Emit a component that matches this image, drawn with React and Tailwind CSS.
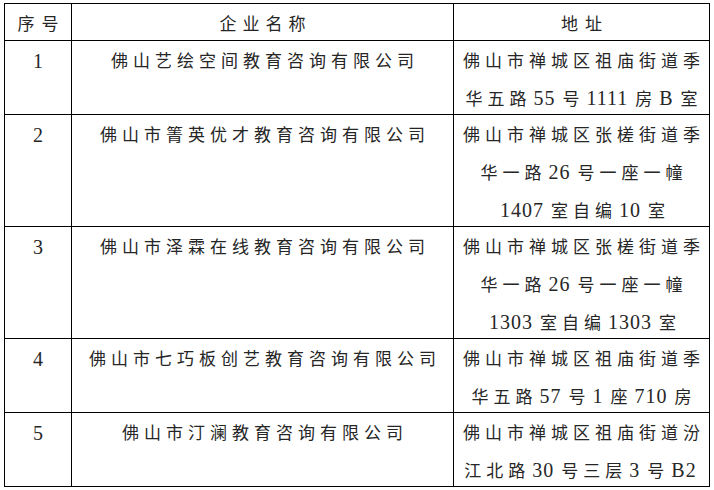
import React from "react";

const rows = [
  {
    no: "1",
    name: "佛山艺绘空间教育咨询有限公司",
    addr: ["佛山市禅城区祖庙街道季", "华五路 55 号 1111 房B 室"],
  },
  {
    no: "2",
    name: "佛山市箐英优才教育咨询有限公司",
    addr: ["佛山市禅城区张槎街道季", "华一路 26 号一座一幢", "1407 室自编 10 室"],
  },
  {
    no: "3",
    name: "佛山市泽霖在线教育咨询有限公司",
    addr: ["佛山市禅城区张槎街道季", "华一路 26 号一座一幢", "1303 室自编 1303 室"],
  },
  {
    no: "4",
    name: "佛山市七巧板创艺教育咨询有限公司",
    addr: ["佛山市禅城区祖庙街道季", "华五路 57 号 1 座 710 房"],
  },
  {
    no: "5",
    name: "佛山市汀澜教育咨询有限公司",
    addr: ["佛山市禅城区祖庙街道汾", "江北路 30 号三层 3 号 B2"],
  },
];

// split a line into CJK runs and latin runs (digits / letters)
function Line({ text }) {
  const parts = text.replace(/ /g, "").split(/([0-9A-Za-z]+)/).filter(Boolean);
  return (
    <div className="whitespace-nowrap pl-[5px]">
      {parts.map((p, i) =>
        /^[0-9A-Za-z]+$/.test(p) ? (
          <span key={i} className="text-[20px] tracking-[1px] ml-[2px] mr-[7px]">
            {p}
          </span>
        ) : (
          <span key={i}>{p}</span>
        )
      )}
    </div>
  );
}

const cell =
  "border-r border-b border-black flex flex-col items-center pt-[2px] leading-[37px]";

export default function App() {
  return (
    <div className="min-h-screen bg-white pl-[4px] pt-[3px]">
      <div
        className="grid grid-cols-[67px_382px_256px] grid-rows-[37px_74px_112px_112px_74px_74px] w-[706px] border-l border-t border-black text-[17px] tracking-[5px] text-[#262626]"
        style={{ fontFamily: '"Liberation Serif", "Noto Sans CJK SC", serif' }}
      >
        <div className={cell + " tracking-[7px] pl-[7px]"}>序号</div>
        <div className={cell + " tracking-[6px] pl-[6px]"}>企业名称</div>
        <div className={cell + " tracking-[7px] pl-[7px]"}>地址</div>

        {rows.map((r) => (
          <React.Fragment key={r.no}>
            <div className={cell}>
              <span className="text-[20px] tracking-normal">{r.no}</span>
            </div>
            <div className={cell}>
              <Line text={r.name} />
            </div>
            <div className={cell}>
              {r.addr.map((a, i) => (
                <Line key={i} text={a} />
              ))}
            </div>
          </React.Fragment>
        ))}
      </div>
    </div>
  );
}
